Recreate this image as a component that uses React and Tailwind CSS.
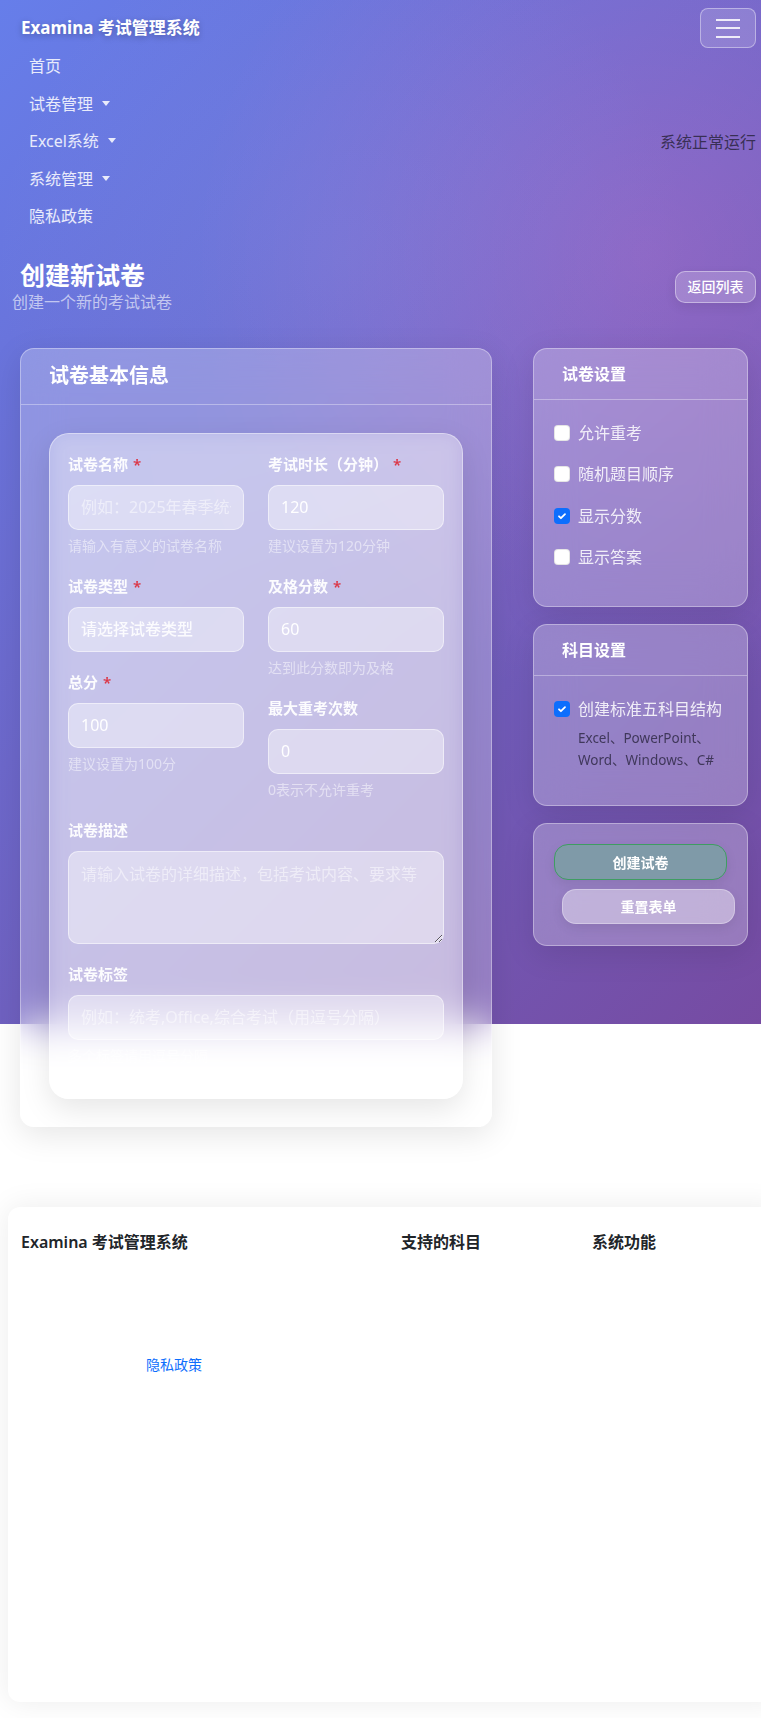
import { memo } from "react";

// Atomic Component: Checkbox
const Check = memo(({ checked }) =>
  checked ? (
    <span className="w-4 h-4 rounded-[4px] bg-[#0d6efd] flex items-center justify-center shrink-0">
      <svg viewBox="0 0 20 20" className="w-3 h-3">
        <path d="M5 10.5l3.2 3.2L15 7" fill="none" stroke="#fff" strokeWidth="3" strokeLinecap="round" strokeLinejoin="round" />
      </svg>
    </span>
  ) : (
    <span className="w-4 h-4 rounded-[4px] bg-white border border-black/10 shrink-0" />
  )
);
Check.displayName = "Check";

// Atomic Component: Form Field
const Field = memo(({ label, required, help, children }) => (
  <div className="mb-[18px]">
    <div className="h-6 leading-6 text-[15px] font-semibold text-white/95 mb-[9px] whitespace-nowrap">
      {label}
      {required && <span className="text-[#dc3545] ml-[5px]">*</span>}
    </div>
    {children}
    {help && <div className="mt-[5px] text-[14px] leading-[21px] text-white/50 whitespace-nowrap">{help}</div>}
  </div>
));
Field.displayName = "Field";

const inputCls =
  "w-full h-[45px] rounded-[10px] border border-white/50 bg-white/40 px-3 text-[16px] text-white placeholder:text-white/50 outline-none";

const Caret = () => (
  <span className="ml-[9px] inline-block w-0 h-0 border-x-[4.5px] border-x-transparent border-t-[5px] border-t-white/85 translate-y-[-1px]" />
);

const navItems = [
  { label: "首页" },
  { label: "试卷管理", caret: true },
  { label: "Excel系统", caret: true },
  { label: "系统管理", caret: true },
  { label: "隐私政策" },
];

const settings = [
  { label: "允许重考" },
  { label: "随机题目顺序" },
  { label: "显示分数", checked: true },
  { label: "显示答案" },
];

const App = () => {
  return (
    <div className="relative overflow-hidden bg-white font-['Noto_Sans','Noto_Sans_CJK_SC',sans-serif] text-[#212529]">
      {/* Gradient background */}
      <div className="absolute top-0 inset-x-0 h-[1024px] bg-[radial-gradient(circle_at_85%_25%,rgba(255,119,198,0.22),transparent_45%),radial-gradient(circle_at_45%_25%,rgba(150,190,255,0.12),transparent_40%),linear-gradient(135deg,#667eea_0%,#764ba2_100%)]" />

      <div className="relative">
        {/* Navbar */}
        <nav>
          <div className="flex items-center justify-between pt-2 pl-[21px] pr-[5px]">
            <span className="text-[17px] font-bold text-white [text-shadow:0_2px_6px_rgba(0,0,0,0.25)]">
              Examina 考试管理系统
            </span>
            <button className="w-14 h-10 rounded-lg border border-white/40 bg-white/15 flex flex-col items-center justify-center gap-[6.5px]">
              <span className="block w-6 h-[2px] bg-white/85" />
              <span className="block w-6 h-[2px] bg-white/85" />
              <span className="block w-6 h-[2px] bg-white/85" />
            </button>
          </div>
          <div className="flex items-center justify-between pl-[29px] pr-[5px]">
            <ul>
              {navItems.map((item) => (
                <li key={item.label} className="py-2 leading-[21.5px] text-[16px] text-white/85 flex items-center">
                  {item.label}
                  {item.caret && <Caret />}
                </li>
              ))}
            </ul>
            <span className="text-[16px] text-[#2b2540]/85">系统正常运行</span>
          </div>
        </nav>

        {/* Page header */}
        <div className="flex items-center justify-between pt-[24px] pl-3 pr-[5px]">
          <div>
            <h2 className="ml-2 text-[25px] leading-[30px] font-semibold text-white">创建新试卷</h2>
            <p className="text-[16px] leading-6 text-white/60">创建一个新的考试试卷</p>
          </div>
          <button className="w-[81px] h-8 rounded-[10px] border border-white/40 bg-white/20 text-[14px] font-medium text-white shadow-[0_4px_12px_rgba(0,0,0,0.08)]">
            返回列表
          </button>
        </div>

        {/* Cards row */}
        <div className="flex items-start gap-[41px] mt-[34px] pl-5 pr-[13px]">
          {/* Main card */}
          <div className="w-[472px] shrink-0 rounded-[14px] border border-white/35 bg-white/25 backdrop-blur-[20px] shadow-[0_8px_32px_rgba(0,0,0,0.1)]">
            <div className="h-[56px] border-b border-white/35 flex items-center px-7">
              <h3 className="text-[20px] font-bold text-white">试卷基本信息</h3>
            </div>
            <div className="px-7 pt-7 pb-[27px]">
              <div className="rounded-[20px] border border-white/40 bg-white/30 backdrop-blur-[10px] shadow-[0_10px_30px_rgba(0,0,0,0.1)] px-[18px] pt-[18px] pb-[14px]">
                <div className="grid grid-cols-2 gap-x-6">
                  <div>
                    <Field label="试卷名称" required help="请输入有意义的试卷名称">
                      <input className={inputCls} placeholder="例如：2025年春季统一考试" />
                    </Field>
                    <Field label="试卷类型" required>
                      <div className={`${inputCls} flex items-center text-white/90 font-medium`}>请选择试卷类型</div>
                    </Field>
                    <Field label="总分" required help="建议设置为100分">
                      <input className={inputCls} defaultValue="100" />
                    </Field>
                  </div>
                  <div>
                    <Field label="考试时长（分钟）" required help="建议设置为120分钟">
                      <input className={inputCls} defaultValue="120" />
                    </Field>
                    <Field label="及格分数" required help="达到此分数即为及格">
                      <input className={inputCls} defaultValue="60" />
                    </Field>
                    <Field label="最大重考次数" help="0表示不允许重考">
                      <input className={inputCls} defaultValue="0" />
                    </Field>
                  </div>
                </div>
                <Field label="试卷描述">
                  <textarea
                    className="w-full h-[93px] block rounded-[10px] border border-white/50 bg-white/40 px-3 py-[10px] text-[16px] text-white placeholder:text-white/50 outline-none"
                    placeholder="请输入试卷的详细描述，包括考试内容、要求等"
                  />
                </Field>
                <Field label="试卷标签" help="多个标签请用逗号分隔">
                  <input className={inputCls} placeholder="例如：统考,Office,综合考试（用逗号分隔）" />
                </Field>
              </div>
            </div>
          </div>

          {/* Side column */}
          <div className="flex-1 flex flex-col gap-[17px]">
            <div className="rounded-[14px] border border-white/35 bg-white/25 backdrop-blur-[20px] shadow-[0_8px_32px_rgba(0,0,0,0.1)]">
              <div className="h-[51px] border-b border-white/35 flex items-center px-7">
                <h4 className="text-[16px] font-bold text-white">试卷设置</h4>
              </div>
              <div className="px-5 pt-[21px] pb-[37px] flex flex-col gap-[17.5px]">
                {settings.map((s) => (
                  <label key={s.label} className="h-6 flex items-center gap-2 text-[16px] text-white/85">
                    <Check checked={s.checked} />
                    {s.label}
                  </label>
                ))}
              </div>
            </div>

            <div className="rounded-[14px] border border-white/35 bg-white/25 backdrop-blur-[20px] shadow-[0_8px_32px_rgba(0,0,0,0.1)]">
              <div className="h-[51px] border-b border-white/35 flex items-center px-7">
                <h4 className="text-[16px] font-bold text-white">科目设置</h4>
              </div>
              <div className="px-5 pt-[21px] pb-[34px]">
                <label className="h-6 flex items-center gap-2 text-[16px] text-white/85">
                  <Check checked />
                  创建标准五科目结构
                </label>
                <div className="mt-[6px] pl-6 text-[13.5px] leading-[22px] text-[#2b2540]/80">
                  Excel、PowerPoint、
                  <br />
                  Word、Windows、C#
                </div>
              </div>
            </div>

            <div className="rounded-[14px] border border-white/35 bg-white/25 backdrop-blur-[20px] shadow-[0_8px_32px_rgba(0,0,0,0.1)] p-5 pt-[20px] pb-[21px] flex flex-col gap-[9px]">
              <button className="h-9 rounded-[14px] border border-[#3f9d62] bg-[#7f9aa8] text-[14px] font-semibold text-white shadow-[0_4px_12px_rgba(0,0,0,0.08)]">
                创建试卷
              </button>
              <button className="h-[35px] w-full ml-2 rounded-[14px] border border-white/30 bg-white/40 text-[14px] font-semibold text-white shadow-[0_4px_12px_rgba(0,0,0,0.08)]">
                重置表单
              </button>
            </div>
          </div>
        </div>

        {/* Footer */}
        <footer className="mt-[80px] mb-4 ml-2 mr-[-20px] h-[495px] rounded-xl bg-white shadow-[0_0_30px_rgba(0,0,0,0.08)] pl-[13px] pt-[23px]">
          <div className="flex">
            <div className="w-[386px]">
              <h5 className="text-[16px] leading-6 font-semibold text-[#212529]">Examina 考试管理系统</h5>
            </div>
            <div className="w-[194px]">
              <h5 className="text-[16px] leading-6 font-semibold text-[#212529]">支持的科目</h5>
            </div>
            <div className="w-[192px]">
              <h5 className="text-[16px] leading-6 font-semibold text-[#212529]">系统功能</h5>
            </div>
          </div>
          <div className="mt-[98px] pl-[125px]">
            <a className="text-[14px] leading-[21px] text-[#0d6efd]">隐私政策</a>
          </div>
        </footer>
      </div>
    </div>
  );
};

export default memo(App);
